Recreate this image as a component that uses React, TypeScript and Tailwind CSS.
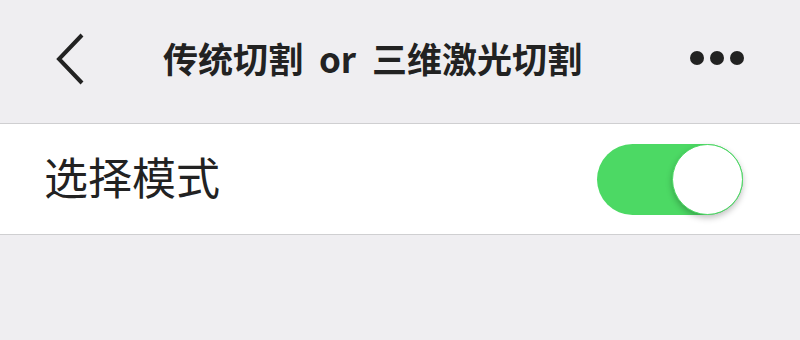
import React from 'react';

const font = { fontFamily: '"Noto Sans CJK SC", "Noto Sans", sans-serif' };

export default function App() {
  return (
    <div className="w-[800px] h-[340px] bg-[#efeef1] text-[#222]" style={font}>
      {/* 顶部导航 */}
      <div className="h-[123px] flex items-center pl-[55px] pr-[56px]">
        <svg width="30" height="52" viewBox="0 0 30 52" className="mt-[-6px]">
          <path d="M27 2 L4 26 L27 50" fill="none" stroke="#222" strokeWidth="4" />
        </svg>
        <div className="ml-[78px] mt-[-6px] text-[35px] font-bold whitespace-pre">
          传统切割  or  三维激光切割
        </div>
        <div className="ml-auto flex items-center gap-[6px] mt-[-8px]">
          <span className="w-[14px] h-[14px] rounded-full bg-[#222]" />
          <span className="w-[14px] h-[14px] rounded-full bg-[#222]" />
          <span className="w-[14px] h-[14px] rounded-full bg-[#222]" />
        </div>
      </div>

      {/* 选择模式 */}
      <div className="h-[112px] bg-white border-y border-[#cfcfd1] flex items-center pl-[44px] pr-[57px]">
        <span className="text-[44px] leading-none mt-[-6px]">选择模式</span>
        <div className="ml-auto w-[146px] h-[71px] rounded-full bg-[#4cd964] relative">
          <div className="absolute right-0 top-0 w-[71px] h-[71px] rounded-full bg-white border border-[#4cd964] shadow-[0_3px_6px_rgba(0,0,0,0.25)]" />
        </div>
      </div>
    </div>
  );
}
